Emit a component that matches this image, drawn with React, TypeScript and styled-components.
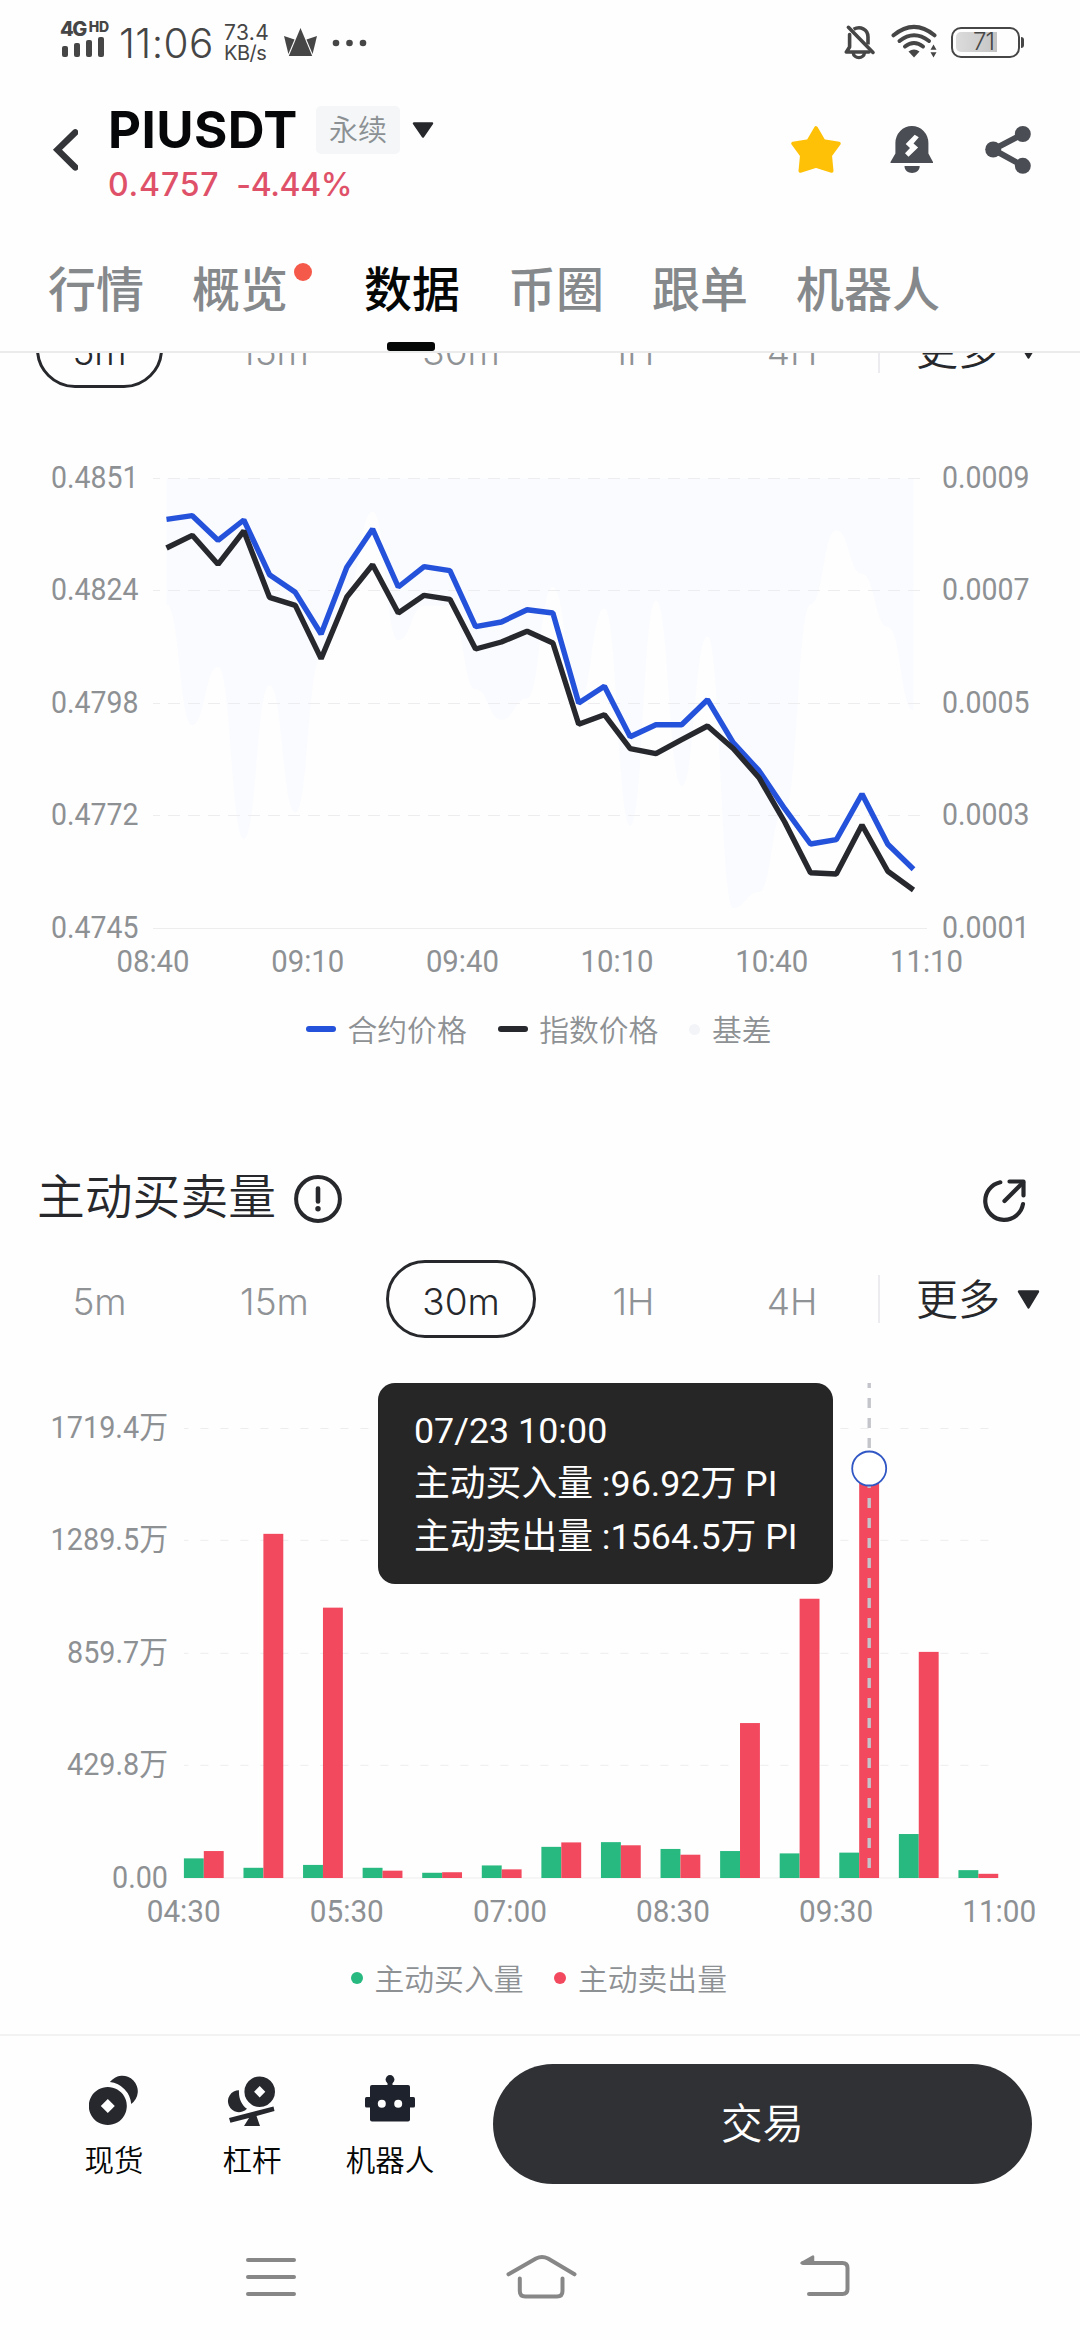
import React from "react";
import styled, { createGlobalStyle } from "styled-components";

const CJK = `"Noto Sans CJK SC", sans-serif`;
const UI = `Inter, ${CJK}`;
const DIGITS = `Roboto, ${CJK}`;

const color = {
  page: "#fefefe",
  ink: "#26282c",
  muted: "#8e9194",
  status: "#464646",
  blue: "#2552db",
  black: "#26282e",
  green: "#27b97f",
  red: "#f2495e",
  grid: "#ededef",
};

const GlobalStyle = createGlobalStyle`
  * { box-sizing: border-box; }
  body { margin: 0; background: ${color.page}; }
  svg { display: block; flex: none; }
  button { border: 0; padding: 0; background: none; font: inherit; color: inherit; }
`;

const Screen = styled.div`
  width: 1080px;
  height: 2340px;
  display: flex;
  flex-direction: column;
  overflow: hidden;
  background: ${color.page};
  color: ${color.ink};
  font-family: ${UI};
`;

/* ---------- status bar ---------- */

const StatusBar = styled.div`
  height: 86px;
  padding: 0 60px 0 60px;
  display: flex;
  justify-content: space-between;
  color: ${color.status};
`;

const StatusGroup = styled.div`
  display: flex;
  align-items: flex-start;
`;

const Signal = styled.div`
  width: 47px;
  margin: 20px 12px 0 0;
`;

const Network = styled.div`
  display: flex;
  align-items: flex-start;
  height: 17px;
  font-weight: 800;
  font-size: 20px;
  line-height: 19px;
  letter-spacing: -1.5px;
`;

const NetworkHd = styled.span`
  margin-left: 3px;
  font-size: 14px;
  line-height: 14px;
  letter-spacing: -0.4px;
`;

const SignalBars = styled.div`
  display: flex;
  align-items: flex-end;
  gap: 6px;
  height: 20px;
  padding-left: 2px;
`;

const SignalBar = styled.i<{ $h: number }>`
  width: 6px;
  height: ${(p) => p.$h}px;
  border-radius: 2px;
  background: ${color.status};
`;

const Clock = styled.div`
  width: 104px;
  margin-top: 20px;
  font-size: 40.5px;
  line-height: 48px;
  font-weight: 350;
  letter-spacing: 0.4px;
  white-space: nowrap;
`;

const Speed = styled.div`
  width: 60px;
  margin: 23px 0 0 1px;
  font-size: 20px;
  line-height: 20px;
  letter-spacing: -0.5px;

  &::first-line {
    font-size: 21px;
    letter-spacing: 0.4px;
  }
`;

const StatusIcons = styled.div`
  display: flex;
  align-items: flex-start;
  padding-top: 24px;
`;

/* ---------- header ---------- */

const Header = styled.header`
  height: 144px;
  display: flex;
  align-items: flex-start;
  padding: 0 48px 0 52px;
`;

const BackButton = styled.button`
  padding: 42px 0 0;
  width: 56px;
`;

const Pair = styled.div`
  flex: 1;
  padding-top: 14px;
`;

const PairTop = styled.div`
  display: flex;
  align-items: center;
  height: 60px;
`;

const Symbol = styled.h1`
  margin: 0;
  width: 208px;
  font-size: 51px;
  line-height: 60px;
  font-weight: 700;
  letter-spacing: 0.4px;
  color: #060708;
`;

const Tag = styled.span`
  width: 84px;
  height: 48px;
  border-radius: 5px;
  background: #f4f6f7;
  color: #8b9093;
  font: 350 29px/44px ${CJK};
  text-align: center;
  margin-right: 12px;
`;

const Quote = styled.div`
  display: flex;
  gap: 17px;
  font-size: 32px;
  line-height: 40px;
  margin-top: 5px;
  font-weight: 500;
  color: #df5168;
`;

const LastPrice = styled.span`
  letter-spacing: 0.8px;
`;

const Change = styled.span`
  letter-spacing: -0.4px;
`;

const HeaderActions = styled.div`
  display: flex;
  align-items: flex-start;
  padding-top: 39px;
`;

/* ---------- tabs ---------- */

const Tabs = styled.nav`
  flex: none;
  height: 123px;
  display: flex;
  gap: 48px;
  padding: 19px 48px 0;
  border-bottom: 2px solid #ebebec;
`;

const Tab = styled.div<{ $active?: boolean; $dot?: boolean }>`
  position: relative;
  padding-right: ${(p) => (p.$dot ? 28 : 0)}px;
  font: 500 48px/74px ${CJK};
  white-space: nowrap;
  color: ${(p) => (p.$active ? "#050606" : "#86898b")};

  &::after {
    content: "";
    display: ${(p) => (p.$active ? "block" : "none")};
    width: 48px;
    height: 9px;
    margin: 19px 0 0 22.5px;
    border-radius: 3px;
    background: #050606;
  }
`;

const Dot = styled.i`
  position: absolute;
  right: 4.5px;
  top: 14px;
  width: 18px;
  height: 18px;
  border-radius: 50%;
  background: #f5594a;
`;

/* ---------- scrolling content ---------- */

const Content = styled.main`
  flex: 1;
  min-height: 0;
  overflow: hidden;
`;

const ScrolledPage = styled.div`
  margin-top: -43px;
`;

const Periods = styled.div`
  display: flex;
  align-items: center;
  height: 78px;
  padding-left: 36px;
`;

const Period = styled.button<{ $w: number; $active?: boolean }>`
  width: ${(p) => p.$w}px;
  height: 78px;
  margin-right: 40px;
  padding-top: 4px;
  border: 3px solid ${(p) => (p.$active ? color.ink : "transparent")};
  border-radius: 39px;
  font-size: 37px;
  font-weight: 300;
  color: ${(p) => (p.$active ? color.ink : "#909396")};
`;

const PeriodRule = styled.i`
  width: 2px;
  height: 48px;
  margin: 0 36px 0 -15px;
  background: #ececf0;
`;

const More = styled.button`
  display: flex;
  align-items: center;
  gap: 17px;
  font: 350 42px/60px ${CJK};
  white-space: nowrap;
`;

const MoreLabel = styled.span`
  margin-top: -5px;
`;

const ChartBox = styled.div<{ $top: number }>`
  position: relative;
  margin-top: ${(p) => p.$top}px;
`;

const AxisText = styled.text`
  font: 400 31px ${DIGITS};
  fill: ${color.muted};
`;

const Legend = styled.div<{ $top: number; $left: number; $gap: number }>`
  display: flex;
  align-items: center;
  gap: ${(p) => p.$gap}px;
  height: 40px;
  margin-top: ${(p) => p.$top}px;
  padding-left: ${(p) => p.$left}px;
`;

const LegendItem = styled.div`
  display: flex;
  align-items: center;
  gap: 11.5px;
  font: 350 29.8px/40px ${CJK};
  color: ${color.muted};
`;

const LegendLabel = styled.span`
  margin-top: -3px;
`;

const LegendMark = styled.i<{ $w: number; $h: number; $c: string }>`
  width: ${(p) => p.$w}px;
  height: ${(p) => p.$h}px;
  border-radius: ${(p) => p.$h / 2}px;
  background: ${(p) => p.$c};
`;

const SectionHead = styled.div`
  display: flex;
  align-items: center;
  height: 56px;
  margin: 122px 52px 33px 37px;
`;

const SectionTitle = styled.h2`
  margin: -11px 18px 0 0;
  font: 350 47.8px/56px ${CJK};
`;

const Spacer = styled.div`
  flex: 1;
`;

const Tooltip = styled.div`
  position: absolute;
  left: 378px;
  top: 0;
  width: 455px;
  height: 201px;
  padding: 22px 0 0 36px;
  border-radius: 17px;
  background: #262626;
  color: #fff;
  font: 400 35.8px/53px ${DIGITS};
  white-space: nowrap;
`;

/* ---------- bottom ---------- */

const ActionBar = styled.footer`
  flex: none;
  height: 186px;
  display: flex;
  border-top: 2px solid #f2f2f3;
  padding: 28px 48px 0 45px;
`;

const Shortcut = styled.div`
  width: 138px;
  display: flex;
  flex-direction: column;
  align-items: center;
  padding-top: 11px;
  font: 350 29.5px/40px ${CJK};
  color: #050606;
`;

const ShortcutLabel = styled.span`
  margin-top: 11px;
`;

const TradeButton = styled.button`
  flex: 1;
  margin-left: 34px;
  height: 120px;
  padding-bottom: 6px;
  border-radius: 60px;
  background: #2f3134;
  color: #fff;
  font: 350 41.5px/60px ${CJK};
`;

const SystemNav = styled.div`
  flex: none;
  height: 120px;
  display: flex;
  padding: 30px 0 0 244px;
`;

/* ---------- icons ---------- */

const Caret = ({ w, h }: { w: number; h: number }) => (
  <svg width={w} height={h} viewBox="0 0 23 18" preserveAspectRatio="none">
    <path d="M2 1.5h19L11.5 16.5Z" fill={color.ink} stroke={color.ink} strokeWidth="2.4" strokeLinejoin="round" />
  </svg>
);

const BackIcon = () => (
  <svg width="26" height="44" viewBox="0 0 26 44" fill="none" stroke="#333539" strokeWidth="6.4" strokeLinejoin="miter">
    <path d="M23.3 4.4 5.5 21.8l17.8 17.6" strokeLinecap="round" />
  </svg>
);

const CrownIcon = () => (
  <svg width="34" height="30" viewBox="0 0 34 30" fill={color.status}>
    <path d="M16.5 0 28.2 28H4.8Z" />
    <path d="M0 8l10.500 3.500L4.400 26Z" />
    <path d="M33 8l-10.500 3.500L28.600 26Z" />
  </svg>
);

const MoreDots = () => (
  <svg width="36" height="8" viewBox="0 0 36 8" fill={color.status}>
    <circle cx="4" cy="4" r="3.3" />
    <circle cx="17.5" cy="4" r="3.3" />
    <circle cx="31" cy="4" r="3.3" />
  </svg>
);

const MutedIcon = () => (
  <svg width="32" height="36" viewBox="0 0 32 36" fill="none" stroke={color.status} strokeWidth="3.6">
    <path d="M5.6 10.5V23L2.4 28H25" strokeLinejoin="round" strokeLinecap="round" />
    <path d="M9.6 5.3C16 1.6 24 5 24 13v7.5" />
    <path d="M9 28.500c.8 6.800 11 6.800 11.600 0" strokeWidth="3.200" />
    <path d="M4.400 3.300 29 28.400" strokeLinecap="round" />
  </svg>
);

const WifiIcon = () => (
  <svg width="48" height="36" viewBox="0 0 48 36" fill="none" stroke={color.status} strokeWidth="4" strokeLinecap="round">
    <path d="M2.500 11.300Q23 -5.500 43.500 11.300" />
    <path d="M8.500 17Q23 5.500 38 17" />
    <path d="M14 22.500Q23 15.500 32 22.500" />
    <path d="M17.500 27.500q5.500-4 11 0L23 33.500Z" fill={color.status} stroke="none" />
    <path d="M42.500 20.500l3 5.200h-6ZM42.500 33.500l3-5.200h-6Z" fill={color.status} stroke="none" />
  </svg>
);

const BatteryShell = styled.div`
  position: relative;
  width: 69px;
  height: 31px;
  margin: 3px 0 0 12px;
  padding: 3px;
  border: 2.5px solid ${color.status};
  border-radius: 10px;

  &::after {
    content: "";
    position: absolute;
    right: -6px;
    top: 8px;
    width: 3px;
    height: 11px;
    border-radius: 0 3px 3px 0;
    background: ${color.status};
  }
`;

const BatteryLevel = styled.div`
  width: 41px;
  height: 20px;
  padding-left: 17px;
  border-radius: 5px 0 0 5px;
  background: linear-gradient(90deg, #dcdcdc, #c4c4c4);
  font-size: 24px;
  font-weight: 300;
  line-height: 20px;
  letter-spacing: -1px;
`;

const StarIcon = () => (
  <svg width="52" height="50" viewBox="0 0 52 50">
    <path
      d="M26 3 33.600 16 49 18.500 40.200 30.500 41.700 46 26 41 10.300 46 11.800 30.500 3 18.500 18.400 16Z"
      fill="#ffc107"
      stroke="#ffc107"
      strokeWidth="3.600"
      strokeLinejoin="round"
    />
  </svg>
);

const AlertIcon = () => (
  <svg width="44" height="48" viewBox="0 0 44 48" fill="#4a4d53">
    <path d="M5.400 17a16.500 17 0 0 1 33 0v10.500L43 36v1H.500v-1L5.400 27.500Z" />
    <path d="M14.500 40h15.200c0 9.300-15.200 9.300-15.200 0Z" />
    <path d="M24.700 8.700l4.100 2.600L23.500 17.500l4.600 4-9.600 9.200L15 27.300 20 22l-4.300-4Z" fill="#fff" />
  </svg>
);

const ShareIcon = () => (
  <svg width="47" height="48" viewBox="0 0 47 48" fill="#4a4d53">
    <path d="M37.800 8 8.200 23.500l29.600 16.300" fill="none" stroke="#4a4d53" strokeWidth="6" />
    <circle cx="37.800" cy="8" r="8" />
    <circle cx="8.200" cy="23.500" r="8" />
    <circle cx="37.800" cy="39.800" r="8" />
  </svg>
);

const InfoIcon = () => (
  <svg width="48" height="48" viewBox="0 0 48 48" fill="none" stroke={color.ink} strokeWidth="4">
    <circle cx="24" cy="24" r="21.900" />
    <path d="M24 13.500V26.500" strokeLinecap="round" strokeWidth="4.600" />
    <circle cx="24" cy="33.700" r="2.700" fill={color.ink} stroke="none" />
  </svg>
);

const ExportIcon = () => (
  <svg width="46" height="46" viewBox="0 0 46 46" fill="none" stroke={color.ink} strokeWidth="4.200" strokeLinecap="round" strokeLinejoin="round">
    <path d="M18.300 6.300A19 19 0 1 0 41 28" />
    <path d="M22.500 25 41 6.500" />
    <path d="M27.500 5.500H41.500V19.500" />
  </svg>
);

const SpotIcon = () => (
  <svg width="50" height="52" viewBox="0 0 50 52" fill={color.black}>
    <path d="M20.900 7A15.500 15.500 0 1 1 42.200 29 24 24 0 0 0 20.900 7Z" />
    <path fillRule="evenodd" d="M18.800 12a19 19 0 1 0 .01 0ZM18.800 24l7 7-7 7-7-7Z" />
  </svg>
);

const MarginIcon = () => (
  <svg width="50" height="52" viewBox="0 0 50 52" fill={color.black}>
    <path fillRule="evenodd" d="M32.700 1.400a15.300 15.300 0 1 0 .01 0ZM32.700 11l5.600 5.700-5.600 5.700-5.600-5.700Z" />
    <path d="M12 15.200C11.500 23 14.500 30 20 33.700A11 11 0 1 1 12 15.200Z" />
    <path d="M2 43 46.500 31.500l1 4.500L29.500 41 33 51H17l5-8-18.600 4.800Z" />
  </svg>
);

const RobotIcon = () => (
  <svg width="50" height="52" viewBox="0 0 50 52" fill="#1e222d">
    <circle cx="25" cy="4.500" r="4.400" />
    <path d="M22.500 6h5v6h-5Z" />
    <rect x="5" y="10" width="40" height="36.500" rx="2" />
    <rect x="0" y="22" width="50" height="10.500" rx="1.500" />
    <circle cx="16.800" cy="28.700" r="4" fill="#fff" />
    <circle cx="33.200" cy="28.700" r="4" fill="#fff" />
  </svg>
);

const NavIcon = styled.svg`
  fill: none;
  stroke: #878787;
  stroke-width: 4;
  stroke-linecap: round;
  stroke-linejoin: round;
`;

/* ---------- basis chart ---------- */

const PLOT_H = 450;
const STEP = 25.76;
const FIRST_X = 166.5;

const contractPrice = [
  79.3, 75.7, 100.3, 80, 134.7, 152.3, 194, 127.3, 89, 147, 126.7, 130.7, 186.7, 182, 169.7, 173, 263, 246.3, 296.7,
  284.7, 284.7, 259.7, 302.7, 330.7, 368.7, 404, 399.7, 354, 404.3, 429.3,
];
const indexPrice = [
  108, 95.3, 124.3, 91, 157.3, 165.3, 218.7, 157, 124.7, 173, 155.3, 159.3, 209, 202, 191.3, 203, 284.3, 274.7, 308.7,
  313.7, 299.7, 286, 308.500, 337.700, 382, 432.7, 434, 385, 431.3, 450,
];
const PRICE_TOP = 8;

const px = (i: number) => FIRST_X + i * STEP;
const line = (values: number[]) => values.map((v, i) => `${px(i).toFixed(1)},${(v - PRICE_TOP).toFixed(1)}`).join(" ");

/* The basis is the spread between both prices, read on the right-hand axis. */
function basisArea(top: number) {
  const ys = contractPrice.map((c, i) => {
    const basis = ((indexPrice[i] - c) * 0.0106) / PLOT_H;
    return top + Math.min(PLOT_H, Math.max(0, ((0.0009 - basis) / 0.0008) * PLOT_H));
  });
  let d = `M${px(0)} ${top}V${ys[0]}`;
  for (let i = 1; i < ys.length; i++) {
    const mid = (px(i - 1) + px(i)) / 2;
    d += `C${mid} ${ys[i - 1]} ${mid} ${ys[i]} ${px(i)} ${ys[i]}`;
  }
  return `${d}V${top}Z`;
}

function BasisChart() {
  const top = 30.5;
  const rows = [0, 112, 225, 337, 450];
  const left = ["0.4851", "0.4824", "0.4798", "0.4772", "0.4745"];
  const right = ["0.0009", "0.0007", "0.0005", "0.0003", "0.0001"];
  const times = ["08:40", "09:10", "09:40", "10:10", "10:40", "11:10"];
  return (
    <svg width="1080" height="540" viewBox="0 0 1080 540">
      <path d={basisArea(top)} fill="#fafbfe" />
      {rows.map((r, i) => (
        <g key={r}>
          <line
            x1="153"
            x2={i === 4 ? 927 : 920}
            y1={top + r}
            y2={top + r}
            stroke={color.grid}
            strokeDasharray={i === 4 ? undefined : "12 8"}
            strokeDashoffset="5"
          />
          <AxisText x="51" y={top + r + 9.5} textLength="87.500" lengthAdjust="spacingAndGlyphs">
            {left[i]}
          </AxisText>
          <AxisText x="942" y={top + r + 9.5} textLength="87.500" lengthAdjust="spacingAndGlyphs">
            {right[i]}
          </AxisText>
        </g>
      ))}
      {times.map((t, i) => (
        <AxisText key={t} x={153 + i * 154.7} y="524" textAnchor="middle" textLength="73" lengthAdjust="spacingAndGlyphs">
          {t}
        </AxisText>
      ))}
      <polyline points={line(contractPrice)} fill="none" stroke={color.blue} strokeWidth="5.400" strokeLinejoin="bevel" />
      <polyline points={line(indexPrice)} fill="none" stroke={color.black} strokeWidth="5.400" strokeLinejoin="bevel" />
    </svg>
  );
}

/* ---------- taker volume chart ---------- */

const MAX_VOLUME = 1719.4;
const volumes: [number, number][] = [
  [75, 103], [39, 1315], [50, 1033], [39, 28], [20, 22], [48, 33], [119, 136],
  [137, 125], [111, 89], [103, 592], [94, 1067], [96.92, 1564.5], [168, 864], [30, 16],
];

function VolumeChart() {
  const base = 495;
  const scale = PLOT_H / MAX_VOLUME;
  const axis: [string, number][] = [
    ["1719.4万", 117.5], ["1289.5万", 117.5], ["859.7万", 101], ["429.8万", 101], ["0.00", 56],
  ];
  const rows = [45.5, 157.3, 270.3, 382.3, 495];
  const times = ["04:30", "05:30", "07:00", "08:30", "09:30", "11:00"];
  const cursor = 869.2;
  return (
    <svg width="1080" height="547" viewBox="0 0 1080 547">
      {rows.map((y, i) => (
        <g key={y}>
          <line
            x1="184"
            x2={i === 4 ? 998 : 989}
            y1={y}
            y2={y}
            stroke={color.grid}
            strokeDasharray={i === 4 ? undefined : "8 12"}
            strokeDashoffset="3.600"
          />
          <AxisText x="168" y={y + 9.5} textAnchor="end" textLength={axis[i][1]} lengthAdjust="spacingAndGlyphs">
            {axis[i][0]}
          </AxisText>
        </g>
      ))}
      {volumes.map(([buy, sell], i) => {
        const x = 183.9 + i * 59.58;
        return (
          <g key={i}>
            <rect x={x} y={base - buy * scale} width="19.900" height={buy * scale} fill={color.green} />
            <rect x={x + 19.9} y={base - sell * scale} width="19.900" height={sell * scale} fill={color.red} />
          </g>
        );
      })}
      {times.map((t, i) => (
        <AxisText key={t} x={183.7 + i * 163.1} y="539" textAnchor="middle" textLength="74" lengthAdjust="spacingAndGlyphs">
          {t}
        </AxisText>
      ))}
      <line x1={cursor} x2={cursor} y1="0" y2="485" stroke="#c3c5cb" strokeWidth="3.400" strokeDasharray="10 10" strokeDashoffset="5" />
      <circle cx={cursor} cy="85.500" r="17" fill="#fff" stroke="#3157c4" strokeWidth="1.800" />
    </svg>
  );
}

/* ---------- page ---------- */

function PeriodBar({ active }: { active: string }) {
  const periods: [string, number][] = [["5m", 127], ["15m", 143], ["30m", 150], ["1H", 115], ["4H", 122]];
  return (
    <Periods>
      {periods.map(([label, w]) => (
        <Period key={label} $w={w} $active={label === active}>
          {label}
        </Period>
      ))}
      <PeriodRule />
      <More>
        <MoreLabel>更多</MoreLabel>
        <Caret w={23} h={19} />
      </More>
    </Periods>
  );
}

function LegendEntry({ w, h, c, label }: { w: number; h: number; c: string; label: string }) {
  return (
    <LegendItem>
      <LegendMark $w={w} $h={h} $c={c} />
      <LegendLabel>{label}</LegendLabel>
    </LegendItem>
  );
}

const IconSlot = styled.div<{ $top?: number; $left?: number }>`
  padding: ${(p) => p.$top ?? 0}px 0 0 ${(p) => p.$left ?? 0}px;
`;

export default function App() {
  return (
    <Screen>
      <GlobalStyle />
      <StatusBar>
        <StatusGroup>
          <Signal>
            <Network>
              4G<NetworkHd>HD</NetworkHd>
            </Network>
            <SignalBars>
              <SignalBar $h={11} />
              <SignalBar $h={14} />
              <SignalBar $h={17} />
              <SignalBar $h={20} />
            </SignalBars>
          </Signal>
          <Clock>11:06</Clock>
          <Speed>
            73.4
            <br />
            KB/s
          </Speed>
          <StatusIcons>
            <IconSlot $top={4}>
              <CrownIcon />
            </IconSlot>
            <IconSlot $top={15} $left={14}>
              <MoreDots />
            </IconSlot>
          </StatusIcons>
        </StatusGroup>
        <StatusIcons>
          <MutedIcon />
          <IconSlot $left={15}>
            <WifiIcon />
          </IconSlot>
          <BatteryShell>
            <BatteryLevel>71</BatteryLevel>
          </BatteryShell>
        </StatusIcons>
      </StatusBar>

      <Header>
        <BackButton>
          <BackIcon />
        </BackButton>
        <Pair>
          <PairTop>
            <Symbol>PIUSDT</Symbol>
            <Tag>永续</Tag>
            <Caret w={22} h={16} />
          </PairTop>
          <Quote>
            <LastPrice>0.4757</LastPrice>
            <Change>-4.44%</Change>
          </Quote>
        </Pair>
        <HeaderActions>
          <StarIcon />
          <IconSlot $top={1} $left={48}>
            <AlertIcon />
          </IconSlot>
          <IconSlot $top={1} $left={51}>
            <ShareIcon />
          </IconSlot>
        </HeaderActions>
      </Header>

      <Tabs>
        <Tab>行情</Tab>
        <Tab $dot>
          概览
          <Dot />
        </Tab>
        <Tab $active>数据</Tab>
        <Tab>币圈</Tab>
        <Tab>跟单</Tab>
        <Tab>机器人</Tab>
      </Tabs>

      <Content>
        <ScrolledPage>
          <PeriodBar active="5m" />
          <ChartBox $top={60}>
            <BasisChart />
          </ChartBox>
          <Legend $top={21} $left={306} $gap={31}>
            <LegendEntry w={30} h={6} c={color.blue} label="合约价格" />
            <LegendEntry w={30} h={6} c={color.black} label="指数价格" />
            <LegendEntry w={11} h={11} c="#f3f4f8" label="基差" />
          </Legend>

          <SectionHead>
            <SectionTitle>主动买卖量</SectionTitle>
            <InfoIcon />
            <Spacer />
            <ExportIcon />
          </SectionHead>
          <PeriodBar active="30m" />
          <ChartBox $top={45}>
            <VolumeChart />
            <Tooltip>
              <div>07/23 10:00</div>
              <div>主动买入量 :96.92万 PI</div>
              <div>主动卖出量 :1564.5万 PI</div>
            </Tooltip>
          </ChartBox>
          <Legend $top={28} $left={351} $gap={31}>
            <LegendEntry w={12} h={12} c={color.green} label="主动买入量" />
            <LegendEntry w={12} h={12} c={color.red} label="主动卖出量" />
          </Legend>
        </ScrolledPage>
      </Content>

      <ActionBar>
        <Shortcut>
          <SpotIcon />
          <ShortcutLabel>现货</ShortcutLabel>
        </Shortcut>
        <Shortcut>
          <MarginIcon />
          <ShortcutLabel>杠杆</ShortcutLabel>
        </Shortcut>
        <Shortcut>
          <RobotIcon />
          <ShortcutLabel>机器人</ShortcutLabel>
        </Shortcut>
        <TradeButton>交易</TradeButton>
      </ActionBar>

      <SystemNav>
        <NavIcon width="54" height="50" viewBox="0 0 54 50">
          <path d="M4 10h46M4 27h46M4 44h46" />
        </NavIcon>
        <IconSlot $left={203}>
          <NavIcon width="80" height="50" viewBox="0 0 80 50">
            <path d="M7.500 24.300 35 8.500Q41 5.500 47 8.500L73.500 24.300" />
            <path d="M18.800 28.500V41q0 5.500 5.500 5.500H56q5.500 0 5.500-5.500V28.500" />
          </NavIcon>
        </IconSlot>
        <IconSlot $left={214}>
          <NavIcon width="60" height="50" viewBox="0 0 60 50">
            <path d="M8 13H47.500q5 0 5 5V39q0 5-5 5H14" />
            <path d="M6.500 13 18 6.500V13Z" fill="#878787" strokeWidth="2.500" />
          </NavIcon>
        </IconSlot>
      </SystemNav>
    </Screen>
  );
}
